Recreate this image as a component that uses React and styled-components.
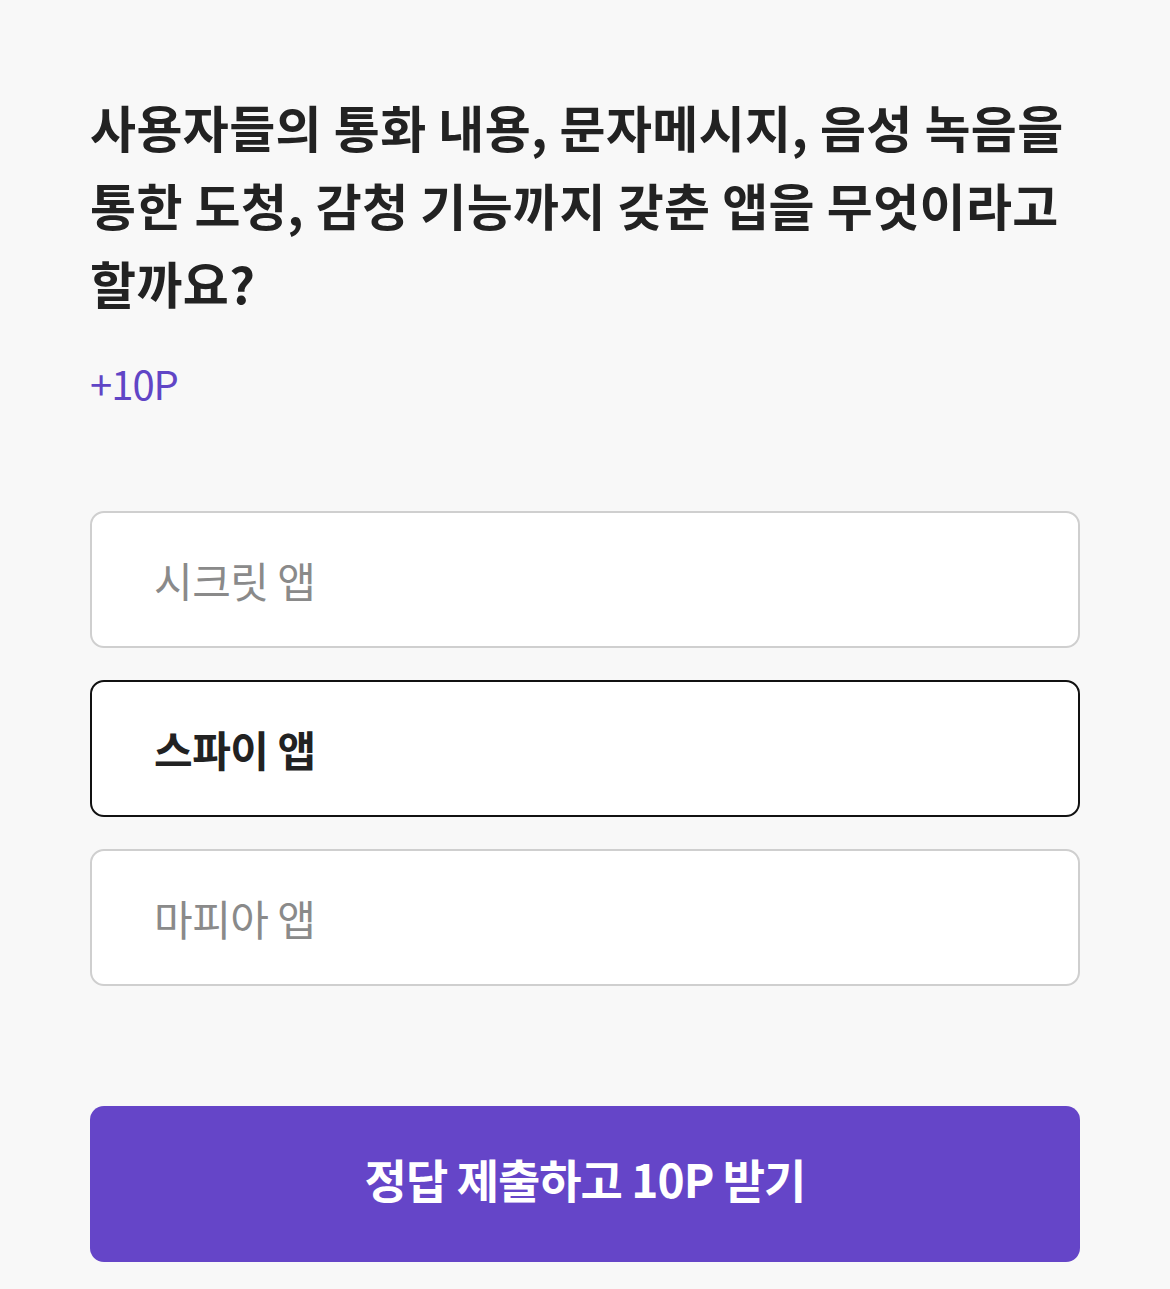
import React, { useState } from 'react';
import styled, { createGlobalStyle } from 'styled-components';

const GlobalStyle = createGlobalStyle`
  body {
    margin: 0;
    background: #f8f8f8;
    font-family: "Noto Sans CJK KR", "Noto Sans", sans-serif;
  }
`;

const Page = styled.main`
  padding: 87px 90px 28px;
  display: flex;
  flex-direction: column;
`;

const Question = styled.h1`
  margin: 0;
  color: #222;
  font-size: 50px;
  font-weight: 700;
  line-height: 78px;
  letter-spacing: 0.4px;
  word-break: keep-all;
`;

const Reward = styled.div`
  margin-top: 37px;
  color: #6045c6;
  font-size: 40px;
  font-weight: 400;
  line-height: 50px;
  letter-spacing: -1px;
`;

const OptionList = styled.ul`
  list-style: none;
  margin: 103px 0 0;
  padding: 0;
  display: flex;
  flex-direction: column;
  gap: 32px;
`;

const Option = styled.li`
  box-sizing: border-box;
  height: 137px;
  display: flex;
  align-items: center;
  padding: 0 62px;
  background: #fff;
  border: 2px solid ${({ $selected }) => ($selected ? '#111' : '#cfcfcf')};
  border-radius: 14px;
  color: ${({ $selected }) => ($selected ? '#222' : '#8a8a8a')};
  font-size: 42px;
  font-weight: ${({ $selected }) => ($selected ? 700 : 400)};
  letter-spacing: -0.5px;
  cursor: pointer;
`;

const SubmitButton = styled.button`
  margin-top: 120px;
  height: 156px;
  border: none;
  border-radius: 14px;
  background: #6545c8;
  color: #fff;
  font-family: inherit;
  font-size: 46px;
  font-weight: 700;
  letter-spacing: -1px;
  padding: 0 0 12px;
  cursor: pointer;
`;

const options = ['시크릿 앱', '스파이 앱', '마피아 앱'];

export default function App() {
  const [selected, setSelected] = useState(1);

  return (
    <>
      <GlobalStyle />
      <Page>
        <Question>
          사용자들의 통화 내용, 문자메시지, 음성 녹음을 통한 도청, 감청 기능까지 갖춘 앱을 무엇이라고 할까요?
        </Question>
        <Reward>+10P</Reward>
        <OptionList>
          {options.map((label, index) => (
            <Option key={label} $selected={index === selected} onClick={() => setSelected(index)}>
              {label}
            </Option>
          ))}
        </OptionList>
        <SubmitButton>정답 제출하고 10P 받기</SubmitButton>
      </Page>
    </>
  );
}
